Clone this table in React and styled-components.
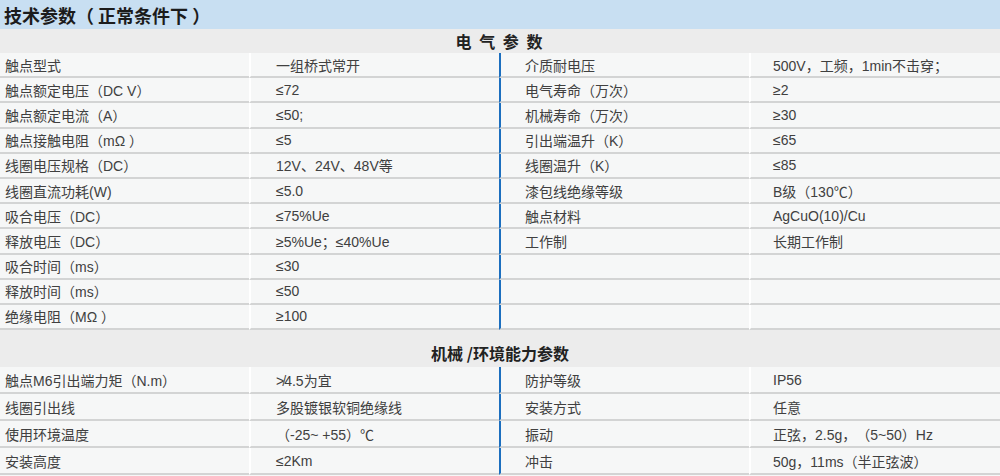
import React from 'react'
import styled, { createGlobalStyle } from 'styled-components'

const GlobalStyle = createGlobalStyle`
  body {
    margin: 0;
    background: #ffffff;
    font-family: "Liberation Sans", "Noto Sans CJK SC", sans-serif;
    text-spacing-trim: space-all;
  }
`

const Page = styled.div`
  width: 1000px;
  height: 476px;
  overflow: hidden;
  background: #f6f7f7;
`
const TitleBar = styled.div`
  height: 29px;
  display: flex;
  align-items: center;
  padding-left: 4px;
  background: #c8dff2;
`
const Title = styled.h1`
  margin: 0;
  font-size: 18px;
  font-weight: 700;
  color: #1c1c1c;
  font-family: "Noto Sans CJK SC", sans-serif;
  white-space: pre;
`
const SectionHead = styled.div`
  height: ${props => props.h}px;
  display: flex;
  align-items: center;
  justify-content: center;
  padding-top: ${props => props.pt || 0}px;
  box-sizing: border-box;
  background: #ececec;
  font-size: 16px;
  font-weight: 700;
  color: #222;
  letter-spacing: ${props => props.spacing || 0}px;
  font-family: "Noto Sans CJK SC", sans-serif;
`
const Row = styled.div`
  display: grid;
  grid-template-columns: 249px 250px 250px 251px;
  height: ${props => props.h}px;
`
const Cell = styled.div`
  display: flex;
  align-items: center;
  padding-left: ${props => props.pad}px;
  box-sizing: border-box;
  background: #f6f7f7;
  border-bottom: 2px solid #d3d4d4;
  border-left: ${props => props.edge ? `2px solid ${props.edge}` : 'none'};
  font-size: 14px;
  color: #404040;
  white-space: nowrap;
`

const electrical = [
  ['触点型式', '一组桥式常开', '介质耐电压', '500V，工频，1min不击穿；'],
  ['触点额定电压（DC V）', '≤72', '电气寿命（万次）', '≥2'],
  ['触点额定电流（A）', '≤50;', '机械寿命（万次）', '≥30'],
  ['触点接触电阻（mΩ ）', '≤5', '引出端温升（K）', '≤65'],
  ['线圈电压规格（DC）', '12V、24V、48V等', '线圈温升（K）', '≤85'],
  ['线圈直流功耗(W)', '≤5.0', '漆包线绝缘等级', 'B级（130℃）'],
  ['吸合电压（DC）', '≤75%Ue', '触点材料', 'AgCuO(10)/Cu'],
  ['释放电压（DC）', '≥5%Ue；≤40%Ue', '工作制', '长期工作制'],
  ['吸合时间（ms）', '≤30', '', ''],
  ['释放时间（ms）', '≤50', '', ''],
  ['绝缘电阻（MΩ ）', '≥100', '', '']
]

const mechanical = [
  ['触点M6引出端力矩（N.m）', '≯4.5为宜', '防护等级', 'IP56'],
  ['线圈引出线', '多股镀银软铜绝缘线', '安装方式', '任意'],
  ['使用环境温度', '（-25~ +55）℃', '振动', '正弦，2.5g，（5~50）Hz'],
  ['安装高度', '≤2Km', '冲击', '50g，11ms（半正弦波）']
]

const SpecRow = ({ h, cells }) => (
  <Row h={h}>
    <Cell pad={5}>{cells[0]}</Cell>
    <Cell pad={25} edge="#ffffff">{cells[1]}</Cell>
    <Cell pad={24} edge="#1c6fbf">{cells[2]}</Cell>
    <Cell pad={22} edge="#ffffff">{cells[3]}</Cell>
  </Row>
)

const App = () => (
  <Page>
    <GlobalStyle />
    <TitleBar>
      <Title>技术参数（ 正常条件下 ）</Title>
    </TitleBar>
    <SectionHead h={24} spacing={2}>电 气 参 数</SectionHead>
    {electrical.map((cells, i) => <SpecRow key={i} h={25.2} cells={cells} />)}
    <SectionHead h={37} pt={8}>机械 /环境能力参数</SectionHead>
    {mechanical.map((cells, i) => <SpecRow key={i} h={27} cells={cells} />)}
  </Page>
)

export default App
